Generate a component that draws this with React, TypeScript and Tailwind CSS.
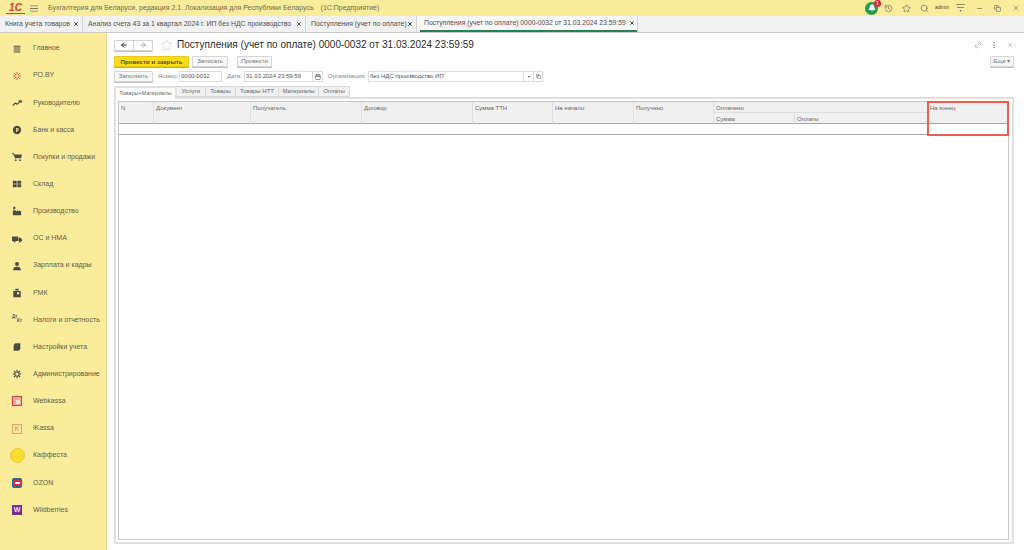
import React from "react";
import { History, Star, Search, X, Minus, Link2, EllipsisVertical, Calendar, Copy, ArrowLeft, ArrowRight, Bell } from "lucide-react";

const ic = "w-[10px] h-[10px] text-[#4c4c46]";

const menu: { label: string; icon: React.ReactNode }[] = [
  { label: "Главное", icon: <svg viewBox="0 0 12 12" className={ic} fill="currentColor"><path d="M2 2h8v1.2H2zM2 4.3h8v1.2H2zM2 6.6h8v1.2H2zM2 8.9h8v1.2H2z" /></svg> },
  { label: "РО.BY", icon: <svg viewBox="0 0 12 12" className="h-[10px] w-[10px] text-[#e8413a]" fill="none" stroke="currentColor" strokeWidth="1"><path d="M6 1v3.5M6 7.5V11M1 6h3.5M7.5 6H11M2.5 2.5l2.3 2.3M7.2 7.2l2.3 2.3M9.5 2.5L7.2 4.8M4.8 7.2L2.5 9.5" /></svg> },
  { label: "Руководителю", icon: <svg viewBox="0 0 12 12" className={ic} fill="none" stroke="currentColor" strokeWidth="1.4"><path d="M1 9l3-3 2 1.5L10 4M8 3.5h3V6" /></svg> },
  { label: "Банк и касса", icon: <svg viewBox="0 0 12 12" className={ic} fill="currentColor"><path fillRule="evenodd" d="M6 1a5 5 0 110 10A5 5 0 016 1zM5 3.5v5h1.2V7h.6a1.8 1.8 0 000-3.5H5zm1.2 1.1h.5a.7.7 0 010 1.3h-.5z" /></svg> },
  { label: "Покупки и продажи", icon: <svg viewBox="0 0 12 12" className={ic} fill="currentColor"><path d="M0 1.5h2.2l.5 1.5H12l-1.2 4.5H3.6L1.5 2.6H0z" /><circle cx="4.5" cy="9.8" r="1.1" /><circle cx="9.5" cy="9.8" r="1.1" /></svg> },
  { label: "Склад", icon: <svg viewBox="0 0 12 12" className={ic} fill="currentColor"><path d="M1 2h4.6v3.6H1zM6.4 2H11v3.6H6.4zM1 6.4h4.6V10H1zM6.4 6.4H11V10H6.4z" /></svg> },
  { label: "Производство", icon: <svg viewBox="0 0 12 12" className={ic} fill="currentColor"><path d="M1.5 1h2.5v3H1.5zM1 5h3l2 1.5V5l2.5 1.5V5L11 6.5V11H1z" /></svg> },
  { label: "ОС и НМА", icon: <svg viewBox="0 0 12 12" className={ic} fill="currentColor"><path d="M0 3h7.5v5.5H0zM8 4.5h2.2L12 6.5v2H8z" /><circle cx="3" cy="9" r="1.2" /><circle cx="9.5" cy="9" r="1.2" /></svg> },
  { label: "Зарплата и кадры", icon: <svg viewBox="0 0 12 12" className={ic} fill="currentColor"><circle cx="6" cy="3.5" r="2.4" /><path d="M1.2 11c0-3 2-4.2 4.8-4.2s4.8 1.2 4.8 4.2z" /></svg> },
  { label: "РМК", icon: <svg viewBox="0 0 12 12" className={ic} fill="currentColor"><path fillRule="evenodd" d="M1.5 3.5h9V11h-9zM6 5.2v2.4h2.6V5.2zM4 1h4v2H4z" /></svg> },
  { label: "Налоги и отчетность", icon: <div className="flex h-[10px] w-[10px] flex-col text-[4.5px] font-bold leading-[4.5px] text-[#5a5a50]"><span>Дт</span><span className="self-end">Кт</span></div> },
  { label: "Настройки учета", icon: <svg viewBox="0 0 12 12" className={ic} fill="currentColor"><path d="M2 3.5L4 1.5h6v7l-2 2H2z" /></svg> },
  { label: "Администрирование", icon: <svg viewBox="0 0 12 12" className={ic} fill="none" stroke="currentColor" strokeWidth="1.3"><circle cx="6" cy="6" r="2.6" /><path d="M6 .8v2M6 9.2v2M.8 6h2M9.2 6h2M2.4 2.4l1.4 1.4M8.2 8.2l1.4 1.4M9.6 2.4L8.2 3.8M3.8 8.2L2.4 9.6" /></svg> },
  { label: "Webkassa", icon: <div className="flex h-[10px] w-[10px] items-center justify-center border border-[#d83a48] bg-[#efa9a4]"><div className="ml-[2px] mt-[2px] h-[4px] w-[4px] bg-[#f8e4d0]" /></div> },
  { label: "iKassa", icon: <div className="flex h-[10px] w-[10px] items-center justify-center border border-[#e0a070] text-[7px] leading-none text-[#c98a50]">K</div> },
  { label: "Каффеста", icon: <div className="h-[15px] w-[15px] rounded-full border border-[#e8c848] bg-[#fbdc2c]" /> },
  { label: "OZON", icon: <div className="flex h-[10px] w-[10px] items-center justify-center rounded-[2px] bg-[#2f62ad]"><div className="h-[6px] w-[9px] rounded-full border-2 border-[#e8283c] bg-white" /></div> },
  { label: "Wildberries", icon: <div className="flex h-[10px] w-[10px] items-center justify-center bg-[#7d2e8c] text-[7px] font-bold leading-none text-[#f4d8f0]">W</div> },
];

const openTabs = [
  { label: "Книга учета товаров", w: "w-[83px]" },
  { label: "Анализ счета 43 за 1 квартал 2024 г. ИП без НДС производство", w: "w-[223px]" },
  { label: "Поступления (учет по оплате)", w: "w-[111px]" },
];

const subTabs = [
  { label: "Услуги", w: "w-[29px]" },
  { label: "Товары", w: "w-[30px]" },
  { label: "Товары НТТ", w: "w-[43px]" },
  { label: "Материалы", w: "w-[40px]" },
  { label: "Оплаты", w: "w-[31px]" },
];

const Btn = ({ children, className = "" }: { children: React.ReactNode; className?: string }) => (
  <div className={`flex h-[11px] items-center justify-center rounded-[1px] border border-[#d6d6d6] bg-[#f7f7f7] text-[6px] text-[#777] shadow-[0_1px_0_#c0c0c0] ${className}`}>{children}</div>
);

const Field = ({ children, className = "" }: { children: React.ReactNode; className?: string }) => (
  <div className={`flex h-[11px] items-center border border-[#dcdcdc] bg-white px-[1px] text-[6px] text-[#555] ${className}`}>{children}</div>
);

const Head = ({ children, className = "" }: { children?: React.ReactNode; className?: string }) => (
  <div className={`border-r border-[#dedede] px-[2px] pt-[2px] text-[6px] leading-[8px] text-[#666] ${className}`}>{children}</div>
);

export default function App() {
  return (
    <div className="flex h-[550px] w-[1024px] flex-col overflow-hidden bg-white font-['Liberation_Sans',sans-serif]">
      {/* title bar */}
      <div className="flex h-[16px] items-center bg-[#fbec9b]">
        <div className="ml-[6px] flex w-[19px] justify-center border-b border-[#d8402a] text-[10px] font-bold italic leading-[10px] text-[#d8402a]">1С</div>
        <svg viewBox="0 0 9 7" className="ml-[5px] h-[7px] w-[8px] text-[#777]" fill="currentColor"><path d="M0 0h9v1H0zM0 3h9v1H0zM0 6h9v1H0z" /></svg>
        <div className="ml-[10px] whitespace-nowrap text-[7px] text-[#716c4e]">Бухгалтерия для Беларуси, редакция 2.1. Локализация для Республики Беларусь</div>
        <div className="ml-[7px] whitespace-nowrap text-[7px] text-[#716c4e]">(1С:Предприятие)</div>
        <div className="relative ml-auto flex h-[13px] w-[13px] items-center justify-center rounded-full bg-[#1f9a50]">
          <Bell className="h-[8px] w-[8px] text-white" fill="white" />
          <div className="absolute right-[-3px] top-[-2px] flex h-[7px] w-[7px] items-center justify-center rounded-full bg-[#e02030] text-[5px] font-bold leading-none text-white">1</div>
        </div>
        <History className="ml-[6px] h-[9px] w-[9px] text-[#555]" strokeWidth={1.5} />
        <Star className="ml-[9px] h-[9px] w-[9px] text-[#555]" strokeWidth={1.5} />
        <Search className="ml-[9px] h-[9px] w-[9px] text-[#555]" strokeWidth={1.5} />
        <div className="ml-[6px] w-[14px] whitespace-nowrap text-[5.2px] text-[#444]">admin</div>
        <svg viewBox="0 0 9 8" className="ml-[7px] h-[8px] w-[9px] text-[#666]" fill="currentColor"><path d="M0 0h9v.8H0zM1 3h7v.8H1zM3.5 6h2L4.5 8z" /></svg>
        <Minus className="ml-[11px] h-[7px] w-[7px] text-[#555]" />
        <Copy className="ml-[11px] h-[7px] w-[7px] text-[#555]" strokeWidth={2} />
        <X className="ml-[11px] mr-[4px] h-[8px] w-[8px] text-[#555]" strokeWidth={1.5} />
      </div>
      {/* open documents */}
      <div className="flex h-[17px] border-b border-[#c8c8c8] bg-[#f1f1f1]">
        {openTabs.map((t) => (
          <div key={t.label} className={`flex items-center justify-between border-r border-[#d4d4d4] pl-[5px] pr-[3px] text-[6.9px] text-[#4e4e4e] ${t.w}`}>
            <span className="whitespace-nowrap">{t.label}</span>
            <X className="h-[6px] w-[6px] shrink-0 text-[#333]" strokeWidth={3.5} />
          </div>
        ))}
        <div className="w-[221px] border-r border-[#d4d4d4] bg-[#f8f8f8] pl-[3px]">
          <div className="flex h-[16px] items-center justify-between border-b-2 border-[#178a50] pl-[4px] pr-[2px] text-[6.8px] text-[#4e4e4e]">
            <span className="whitespace-nowrap">Поступления (учет по оплате) 0000-0032 от 31.03.2024 23:59:59</span>
            <X className="h-[6px] w-[6px] shrink-0 text-[#333]" strokeWidth={3.5} />
          </div>
        </div>
      </div>
      <div className="flex min-h-0 flex-1">
        {/* sections */}
        <div className="flex w-[107px] shrink-0 flex-col border-r border-[#e8dc98] bg-[#fbec9b] pt-[2px]">
          {menu.map((m) => (
            <div key={m.label} className="flex h-[27.15px] items-center">
              <div className="flex w-[33px] shrink-0 justify-center pl-[1px]">{m.icon}</div>
              <span className="whitespace-nowrap text-[7px] text-[#5f5c4c]">{m.label}</span>
            </div>
          ))}
        </div>
        {/* document form */}
        <div className="flex min-w-0 flex-1 flex-col pl-[7px] pr-[10px] pt-[6px]">
          <div className="flex h-[12px] items-center">
            <div className="flex h-[11px] w-[39px] rounded-[1px] border border-[#d4d4d4] shadow-[0_1px_0_#c0c0c0]">
              <div className="flex flex-1 items-center justify-center border-r border-[#d8d8d8]"><ArrowLeft className="h-[8px] w-[8px] text-[#333]" strokeWidth={3} /></div>
              <div className="flex flex-1 items-center justify-center"><ArrowRight className="h-[8px] w-[8px] text-[#aaa]" strokeWidth={3} /></div>
            </div>
            <Star className="ml-[7px] h-[13px] w-[13px] text-[#c8c8c8]" strokeWidth={1.2} />
            <div className="ml-[4px] whitespace-nowrap text-[10px] leading-none text-[#2a2a2a]">Поступления (учет по оплате) 0000-0032 от 31.03.2024 23:59:59</div>
            <Link2 className="ml-auto h-[8px] w-[8px] -rotate-45 text-[#888]" strokeWidth={1.5} />
            <EllipsisVertical className="ml-[8px] h-[8px] w-[8px] text-[#777]" strokeWidth={2} />
            <X className="ml-[9px] mr-[1px] h-[6px] w-[6px] text-[#888]" strokeWidth={2} />
          </div>
          <div className="mt-[5px] flex h-[11px] items-center">
            <div className="flex h-[11px] w-[75px] items-center justify-center rounded-[1px] border border-[#e8c820] bg-[#fbdc1c] text-[6.2px] font-semibold text-[#5a4e10] shadow-[0_1px_0_#c8b030]">Провести и закрыть</div>
            <Btn className="ml-[3px] w-[36px]">Записать</Btn>
            <Btn className="ml-[9px] w-[35px]">Провести</Btn>
            <Btn className="ml-auto w-[24px]">Еще ▾</Btn>
          </div>
          <div className="mt-[4px] flex h-[11px] items-center text-[6px] text-[#888]">
            <Btn className="w-[39px]">Заполнить</Btn>
            <span className="ml-[5px] w-[21px]">Номер:</span>
            <Field className="w-[43px]">0000-0032</Field>
            <span className="ml-[5px] w-[17px]">Дата:</span>
            <Field className="w-[79px] !pr-0">
              <span>31.03.2024 23:59:59</span>
              <span className="ml-auto flex h-full w-[10px] items-center justify-center border-l border-[#d8d8d8]"><Calendar className="h-[6px] w-[6px] text-[#555]" strokeWidth={2.5} /></span>
            </Field>
            <span className="ml-[5px] w-[40px] whitespace-nowrap">Организация:</span>
            <Field className="w-[175px] !pr-0">
              <span>без НДС производство ИП</span>
              <span className="ml-auto flex h-full w-[10px] items-center justify-center border-l border-[#d8d8d8] text-[4px]">▾</span>
              <span className="flex h-full w-[9px] items-center justify-center border-l border-[#d8d8d8]"><Copy className="h-[5px] w-[5px] text-[#555]" strokeWidth={2.5} /></span>
            </Field>
          </div>
          {/* sub tabs */}
          <div className="mt-[4px] flex h-[11px]">
            <div className="z-10 -mb-[2px] flex w-[63px] items-start justify-center whitespace-nowrap rounded-t-[1px] border-2 border-b-0 border-[#e0e0e0] bg-white pt-[1px] text-[5.6px] text-[#666]">Товары+Материалы</div>
            {subTabs.map((t) => (
              <div key={t.label} className={`flex items-center justify-center border border-l-0 border-[#d8d8d8] bg-[#f0f0f0] text-[6px] text-[#666] ${t.w}`}>{t.label}</div>
            ))}
          </div>
          {/* tab page */}
          <div className="mb-[6px] flex min-h-0 flex-1 flex-col border-2 border-[#e0e0e0] pl-[2px] pr-[3px] pt-[2px] pb-[2px]">
            <div className="relative flex min-h-0 flex-1 flex-col border border-[#c8c8c8]">
              <div className="grid h-[22px] grid-cols-[35px_97px_111px_111px_80px_81px_80px_81px_133px_80px] grid-rows-[11px_11px] border-b border-[#a8a8a8] bg-[#f0f0f0]">
                <Head className="row-span-2">N</Head>
                <Head className="row-span-2">Документ</Head>
                <Head className="row-span-2">Получатель</Head>
                <Head className="row-span-2">Договор</Head>
                <Head className="row-span-2">Сумма ТТН</Head>
                <Head className="row-span-2">На начало</Head>
                <Head className="row-span-2">Получено</Head>
                <Head className="col-span-2 border-b">Оплачено</Head>
                <Head className="row-span-2 !border-r-0">На конец</Head>
                <Head className="col-start-8 row-start-2">Сумма</Head>
                <Head className="col-start-9 row-start-2">Оплаты</Head>
              </div>
              <div className="h-[11px] border-b border-[#a8a8a8]" />
              {/* highlight drawn over the last column */}
              <div className="absolute left-[808px] right-[-1px] top-[-1px] h-[35px] border-2 border-[#e8604c]" />
            </div>
          </div>
        </div>
      </div>
    </div>
  );
}
